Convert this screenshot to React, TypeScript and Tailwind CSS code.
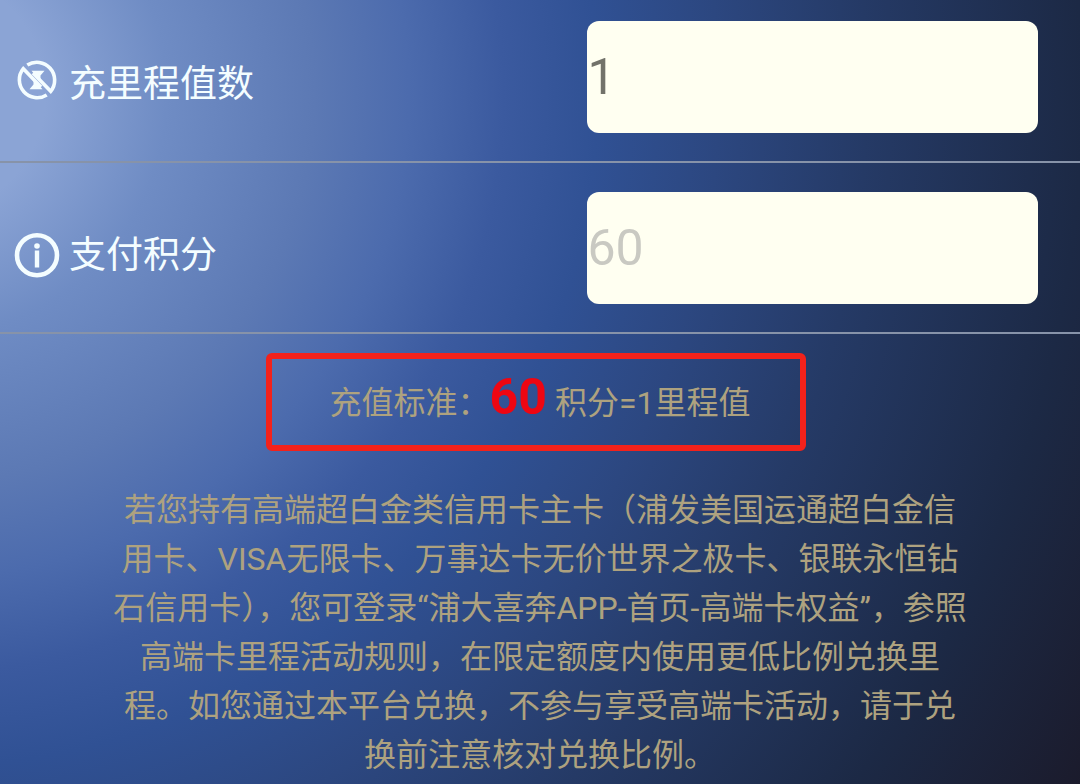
import * as React from "react";

interface FieldRowProps {
  id: string;
  label: string;
  icon: React.ReactNode;
  children: React.ReactNode;
}

const MileageIcon = () => (
  <svg viewBox="0 2 46 46" className="w-[46px] h-[46px] shrink-0 overflow-visible" fill="none" stroke="currentColor" strokeWidth="3.6" aria-hidden="true">
    <path d="M13.3 5.1A17.8 17.8 0 0 1 36.7 31.3L19 13" />
    <path d="M32.700 34.900A17.800 17.800 0 0 1 9.300 8.700L27 27" />
    <path d="M17.5 10.800H30.500L26.500 15.500V21.500Z" fill="currentColor" stroke="none" />
    <path d="M28.500 29.200H15.500L19.500 24.500V18.500Z" fill="currentColor" stroke="none" />
  </svg>
);

const InfoIcon = () => (
  <svg viewBox="0 0 46 46" className="w-[46px] h-[46px] shrink-0" fill="none" stroke="currentColor" aria-hidden="true">
    <circle cx="23" cy="22.3" r="20" strokeWidth="4.6" />
    <circle cx="23" cy="13" r="2.8" fill="currentColor" stroke="none" />
    <path d="M23 17.5V34.5" strokeWidth="4.4" />
  </svg>
);

const FieldRow: React.FC<FieldRowProps> = ({ id, label, icon, children }) => {
  return (
    <div className="flex items-center justify-between pt-[29px] pb-7 pl-[14px] pr-[42px] border-b-2 border-[#8793a9]">
      <label htmlFor={id} className="flex items-center gap-[9px] pt-4 text-[37px] leading-[48px] text-[#f4fdff]">
        {icon}
        {label}
      </label>
      {children}
    </div>
  );
};

const inputClass = "w-[44%] h-28 px-0 rounded-xl bg-[#fffff1] text-[50px] outline-none";

export default function App() {
  const [miles, setMiles] = React.useState("1");
  const points = Number(miles) * 60 || 0;

  return (
    <div className="min-h-screen overflow-hidden font-[Roboto,'Noto_Sans_CJK_SC',sans-serif] bg-[radial-gradient(circle_farthest-corner_at_-7%_12%,#8ba4d5_9%,#6f8cc4_18%,#5c79b4_29%,#4c6bad_36%,#3b5a9f_43%,#305194_50%,#2c4780_59%,#253a66_70%,#1c2945_86%,#1b1b2c_100%)]">
      <form className="-mt-2" onSubmit={(e) => e.preventDefault()}>
        <FieldRow id="miles" label="充里程值数" icon={<MileageIcon />}>
          <input
            id="miles"
            type="text"
            inputMode="numeric"
            value={miles}
            onChange={(e) => setMiles(e.target.value)}
            className={`${inputClass} text-[#72726a]`}
          />
        </FieldRow>
        <FieldRow id="points" label="支付积分" icon={<InfoIcon />}>
          <input id="points" type="text" value={points} disabled className={`${inputClass} text-[#c9c9c2]`} />
        </FieldRow>
      </form>

      <section className="px-[109px] text-center text-[32px] leading-[49px] text-[#aea27f]">
        <p className="relative h-[98px] mt-[19px] pt-[6px] leading-[76px]">
          <span className="absolute top-0 -left-1 right-1 mx-auto w-[540px] h-full border-[6px] border-[#f3221b] rounded-md" />
          充值标准：<strong className="text-[50px] font-bold text-[#ee0612]">60</strong> 积分=1里程值
        </p>
        <p className="mt-[35px]">
          若您持有高端超白金类信用卡主卡（浦发美国运通超白金信用卡、VISA无限卡、万事达卡无价世界之极卡、银联永恒钻石信用卡），您可登录“浦大喜奔APP-首页-高端卡权益”，参照高端卡里程活动规则，在限定额度内使用更低比例兑换里程。如您通过本平台兑换，不参与享受高端卡活动，请于兑换前注意核对兑换比例。
        </p>
      </section>
    </div>
  );
}
